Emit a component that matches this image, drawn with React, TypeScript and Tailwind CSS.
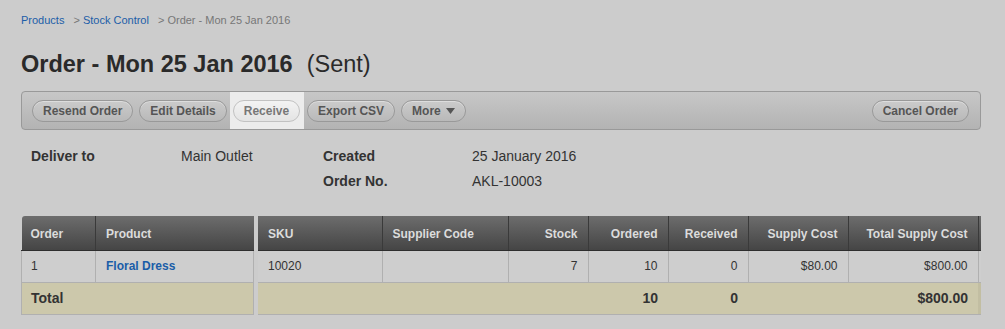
const font = { fontFamily: '"Liberation Sans", Arial, sans-serif' };

const ToolbarButton = ({ label, caret }: { label: string; caret?: boolean }) => (
  <button className="flex h-[22px] items-center gap-[5px] rounded-full border border-[#999] bg-linear-to-b from-[#cbcbcb] to-[#b9b9b9] px-[10px] text-[12px] font-bold text-[#555] shadow-[inset_0_1px_0_rgba(255,255,255,0.35)]">
    {label}
    {caret && (
      <svg width="9" height="6" viewBox="0 0 9 6" className="mt-[1px]">
        <path d="M0 0h9L4.5 6z" fill="#555" />
      </svg>
    )}
  </button>
);

const headCell =
  "h-[34px] border-r border-b border-r-[#3a3a3a] border-b-[#2e2e2e] px-[10px] pt-[3px] text-[12px] font-bold text-[#dcdcdc]";
const bodyBase = "h-[32px] border-r border-b border-[#b0b0b0] px-[10px] text-[12px]";
const bodyCell = `${bodyBase} text-[#333]`;
const totalCell = "h-[32px] border-b border-[#b0b0b0] px-[10px] text-[14px] font-bold text-[#333]";

export default function App() {
  return (
    <div style={font} className="min-h-[329px] w-[1005px] bg-[#cccccc] pl-[21px] pr-[24px] text-[#333]">
      {/* breadcrumb */}
      <div className="flex gap-[9px] pt-[13px] text-[11px] leading-[14px] text-[#777]">
        <span className="text-[#1c5ea8]">Products</span>
        <span>
          &gt; <span className="text-[#1c5ea8]">Stock Control</span>
        </span>
        <span>&gt; Order - Mon 25 Jan 2016</span>
      </div>

      <h1 className="mt-[22px] flex items-baseline text-[23.5px] leading-[30px] text-[#2a2a2a]">
        <span className="font-bold">Order - Mon 25 Jan 2016</span>
        <span className="ml-[14px]">(Sent)</span>
      </h1>

      {/* toolbar */}
      <div className="mt-[12px] flex h-[39px] items-center gap-[6px] rounded-[4px] border border-[#999] bg-linear-to-b from-[#c7c7c7] to-[#b3b3b3] pl-[10px] pr-[11px]">
        <ToolbarButton label="Resend Order" />
        <ToolbarButton label="Edit Details" />
        <div className="-mx-[3px] flex self-stretch items-center bg-[#ececec] pl-[3px] pr-[4px]">
          <button className="flex h-[22px] items-center rounded-full border border-[#c2c2c2] bg-linear-to-b from-[#f3f3f3] to-[#e4e4e4] px-[10px] text-[12px] font-bold text-[#777]">
            Receive
          </button>
        </div>
        <ToolbarButton label="Export CSV" />
        <ToolbarButton label="More" caret />
        <div className="ml-auto">
          <ToolbarButton label="Cancel Order" />
        </div>
      </div>

      {/* details */}
      <div className="mt-[14px] grid grid-cols-[150px_142px_149px_1fr] pl-[10px] text-[14px] leading-[25px]">
        <span className="font-bold">Deliver to</span>
        <span>Main Outlet</span>
        <span className="font-bold">Created</span>
        <span>25 January 2016</span>
        <span />
        <span />
        <span className="font-bold">Order No.</span>
        <span>AKL-10003</span>
      </div>

      {/* tables */}
      <div className="mt-[22px] flex gap-[4px]">
        <table className="w-[232px] table-fixed border-collapse">
          <colgroup>
            <col className="w-[74px]" />
            <col className="w-[158px]" />
          </colgroup>
          <thead>
            <tr className="bg-linear-to-b from-[#6d6d6d] to-[#454545] text-left">
              <th className={`${headCell} rounded-tl-[3px] pl-[9px]`}>Order</th>
              <th className={`${headCell} border-r-0`}>Product</th>
            </tr>
          </thead>
          <tbody>
            <tr className="bg-[#cecece]">
              <td className={`${bodyCell} border-l pl-[9px]`}>1</td>
              <td className={`${bodyBase} font-bold text-[#1a5da8]`}>Floral Dress</td>
            </tr>
            <tr className="bg-[#ccc8ab]">
              <td colSpan={2} className={`${totalCell} border-l border-r border-[#b0b0b0] pl-[9px]`}>
                Total
              </td>
            </tr>
          </tbody>
        </table>

        <div className="w-[724px] overflow-hidden">
          <table className="w-[764px] table-fixed border-collapse">
            <colgroup>
              <col className="w-[124px]" />
              <col className="w-[126px]" />
              <col className="w-[80px]" />
              <col className="w-[80px]" />
              <col className="w-[80px]" />
              <col className="w-[100px]" />
              <col className="w-[130px]" />
              <col className="w-[44px]" />
            </colgroup>
            <thead>
              <tr className="bg-linear-to-b from-[#6d6d6d] to-[#454545]">
                <th className={`${headCell} text-left`}>SKU</th>
                <th className={`${headCell} text-left`}>Supplier Code</th>
                <th className={`${headCell} text-right`}>Stock</th>
                <th className={`${headCell} text-right`}>Ordered</th>
                <th className={`${headCell} text-right`}>Received</th>
                <th className={`${headCell} text-right`}>Supply Cost</th>
                <th className={`${headCell} text-right`}>Total Supply Cost</th>
                <th className={headCell} />
              </tr>
            </thead>
            <tbody>
              <tr className="bg-[#cecece]">
                <td className={`${bodyCell} text-left`}>10020</td>
                <td className={bodyCell} />
                <td className={`${bodyCell} text-right`}>7</td>
                <td className={`${bodyCell} text-right`}>10</td>
                <td className={`${bodyCell} text-right`}>0</td>
                <td className={`${bodyCell} text-right`}>$80.00</td>
                <td className={`${bodyCell} text-right`}>$800.00</td>
                <td className={bodyCell} />
              </tr>
              <tr className="bg-[#ccc8ab]">
                <td className={totalCell} />
                <td className={totalCell} />
                <td className={totalCell} />
                <td className={`${totalCell} text-right`}>10</td>
                <td className={`${totalCell} text-right`}>0</td>
                <td className={totalCell} />
                <td className={`${totalCell} text-right`}>$800.00</td>
                <td className={`${totalCell} bg-[#c2bea2]`} />
              </tr>
            </tbody>
          </table>
        </div>
      </div>
    </div>
  );
}
